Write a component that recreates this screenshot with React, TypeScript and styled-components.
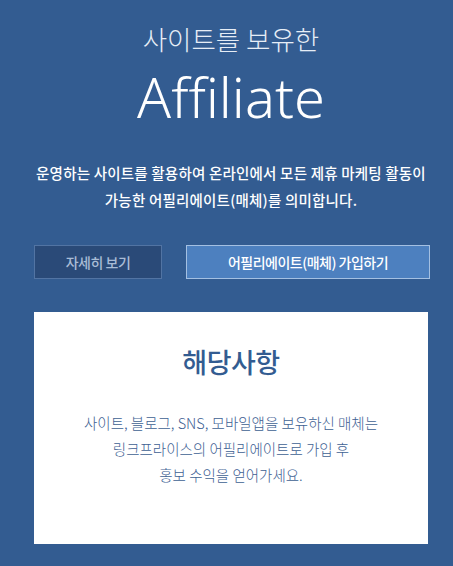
import styled, { createGlobalStyle } from 'styled-components'

const GlobalStyle = createGlobalStyle`
  html, body {
    margin: 0;
    padding: 0;
    background: #335c91;
  }
  body {
    font-family: "Noto Sans CJK KR", "Noto Sans", sans-serif;
  }
`

const Page = styled.div`
  display: flex;
  flex-direction: column;
  align-items: center;
  width: 453px;
  height: 566px;
  padding: 0 25px 0 34px;
  box-sizing: border-box;
  background: #335c91;
  overflow: hidden;
`

const Subtitle = styled.h2`
  margin: 20px 0 0;
  font-size: 26.5px;
  font-weight: 300;
  line-height: 38px;
  color: #e6edf6;
  text-align: center;
`

const Title = styled.h1`
  margin: 0;
  font-family: "Noto Sans", sans-serif;
  font-size: 56px;
  font-weight: 300;
  line-height: 76px;
  color: #ffffff;
  text-align: center;
`

const Lead = styled.p`
  margin: 25px 0 0;
  font-size: 14.5px;
  font-weight: 500;
  line-height: 27px;
  letter-spacing: 0.2px;
  color: #ffffff;
  text-align: center;
`

const Buttons = styled.div`
  display: flex;
  gap: 24px;
  width: 100%;
  margin-top: 32px;
`

const Button = styled.button<{ $primary?: boolean }>`
  flex: ${p => (p.$primary ? '0 0 244px' : '0 0 128px')};
  height: 34px;
  padding: 0;
  font-family: "Noto Sans CJK KR", sans-serif;
  font-size: 14px;
  font-weight: 500;
  letter-spacing: -0.5px;
  color: ${p => (p.$primary ? '#ffffff' : '#a9bcd6')};
  background: ${p => (p.$primary ? '#4d80bf' : '#2a4a78')};
  border: 1px solid ${p => (p.$primary ? '#a4c0e2' : '#5274a3')};
  cursor: pointer;
`

const Card = styled.div`
  display: flex;
  flex-direction: column;
  align-items: center;
  width: 100%;
  height: 232px;
  margin-top: 33px;
  background: #ffffff;
  box-sizing: border-box;
`

const CardTitle = styled.h3`
  margin: 31px 0 0;
  font-size: 27px;
  font-weight: 500;
  line-height: 38px;
  color: #335c91;
  letter-spacing: -0.5px;
`

const CardText = styled.p`
  margin: 29px 0 0;
  font-size: 14.5px;
  font-weight: 300;
  line-height: 26px;
  color: #3e6193;
  text-align: center;
`

function App() {
  return (
    <>
      <GlobalStyle />
      <Page>
        <Subtitle>사이트를 보유한</Subtitle>
        <Title>Affiliate</Title>
        <Lead>
          운영하는 사이트를 활용하여 온라인에서 모든 제휴 마케팅 활동이
          <br />
          가능한 어필리에이트(매체)를 의미합니다.
        </Lead>
        <Buttons>
          <Button>자세히 보기</Button>
          <Button $primary>어필리에이트(매체) 가입하기</Button>
        </Buttons>
        <Card>
          <CardTitle>해당사항</CardTitle>
          <CardText>
            사이트, 블로그, SNS, 모바일앱을 보유하신 매체는
            <br />
            링크프라이스의 어필리에이트로 가입 후
            <br />
            홍보 수익을 얻어가세요.
          </CardText>
        </Card>
      </Page>
    </>
  )
}

export default App
